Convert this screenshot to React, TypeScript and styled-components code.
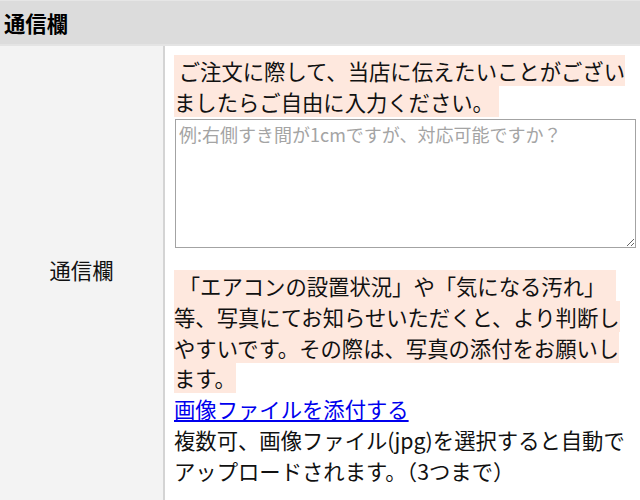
import React from "react";
import styled, { createGlobalStyle } from "styled-components";

const Global = createGlobalStyle`
  html, body {
    margin: 0;
    padding: 0;
    background: #ffffff;
  }
  body {
    font-family: "Noto Sans CJK JP", "Noto Sans", sans-serif;
    color: #111111;
  }
`;

const Section = styled.section`
  width: 640px;
  height: 500px;
  overflow: hidden;
`;

const Header = styled.h2`
  margin: 0;
  height: 46px;
  box-sizing: border-box;
  border-top: 1px solid #e6e6e6;
  border-bottom: 2px solid #e4e4e4;
  background: #dcdcdc;
  padding: 0 4px;
  display: flex;
  align-items: center;
  font-size: 21.33px;
  font-weight: 700;
  color: #000;
`;

const Row = styled.div`
  display: grid;
  grid-template-columns: 165px 1fr;
  min-height: 454px;
`;

const LabelCell = styled.div`
  background: #f3f3f3;
  border-right: 2px solid #d4d4d4;
  display: flex;
  align-items: center;
  justify-content: center;
  padding-bottom: 6px;
  font-size: 21.33px;
  line-height: 30.75px;
`;

const ValueCell = styled.div`
  padding: 10px 4px 8px 9px;
  font-size: 21.33px;
  line-height: 30.75px;
  width: 462px;
`;

const Note = styled.span`
  background: #fee8de;
`;

const Memo = styled.textarea`
  display: block;
  box-sizing: border-box;
  width: 461px;
  height: 129px;
  margin: 1.5px 0 0 1px;
  padding: 2px 3px;
  border: 1px solid #a3a3a3;
  font-family: "Noto Sans CJK JP", "Noto Sans", sans-serif;
  font-size: 18px;
  line-height: 25px;
  color: #111;
  resize: both;
  &::placeholder {
    color: #a4a4a4;
  }
`;

const Block = styled.div`
  margin-top: 23px;
`;

const Attach = styled.a`
  color: #0000ee;
  text-decoration: underline;
  cursor: pointer;
`;

export default function App() {
  return (
    <>
      <Global />
      <Section>
        <Header>通信欄</Header>
        <Row>
          <LabelCell>通信欄</LabelCell>
          <ValueCell>
            <Note>{"\u00a0ご注文に際して、当店に伝えたいことがございましたらご自由に入力ください。\u00a0"}</Note>
            <Memo placeholder="例:右側すき間が1cmですが、対応可能ですか？" />
            <Block>
              <Note>
                {"\u00a0「エアコンの設置状況」や「気になる汚れ」\u3000等、写真にてお知らせいただくと、より判断しやすいです。その際は、写真の添付をお願いします。"}
              </Note>
              <br />
              <Attach>画像ファイルを添付する</Attach>
              <br />
              複数可、画像ファイル(jpg)を選択すると自動でアップロードされます。（3つまで）
            </Block>
          </ValueCell>
        </Row>
      </Section>
    </>
  );
}
